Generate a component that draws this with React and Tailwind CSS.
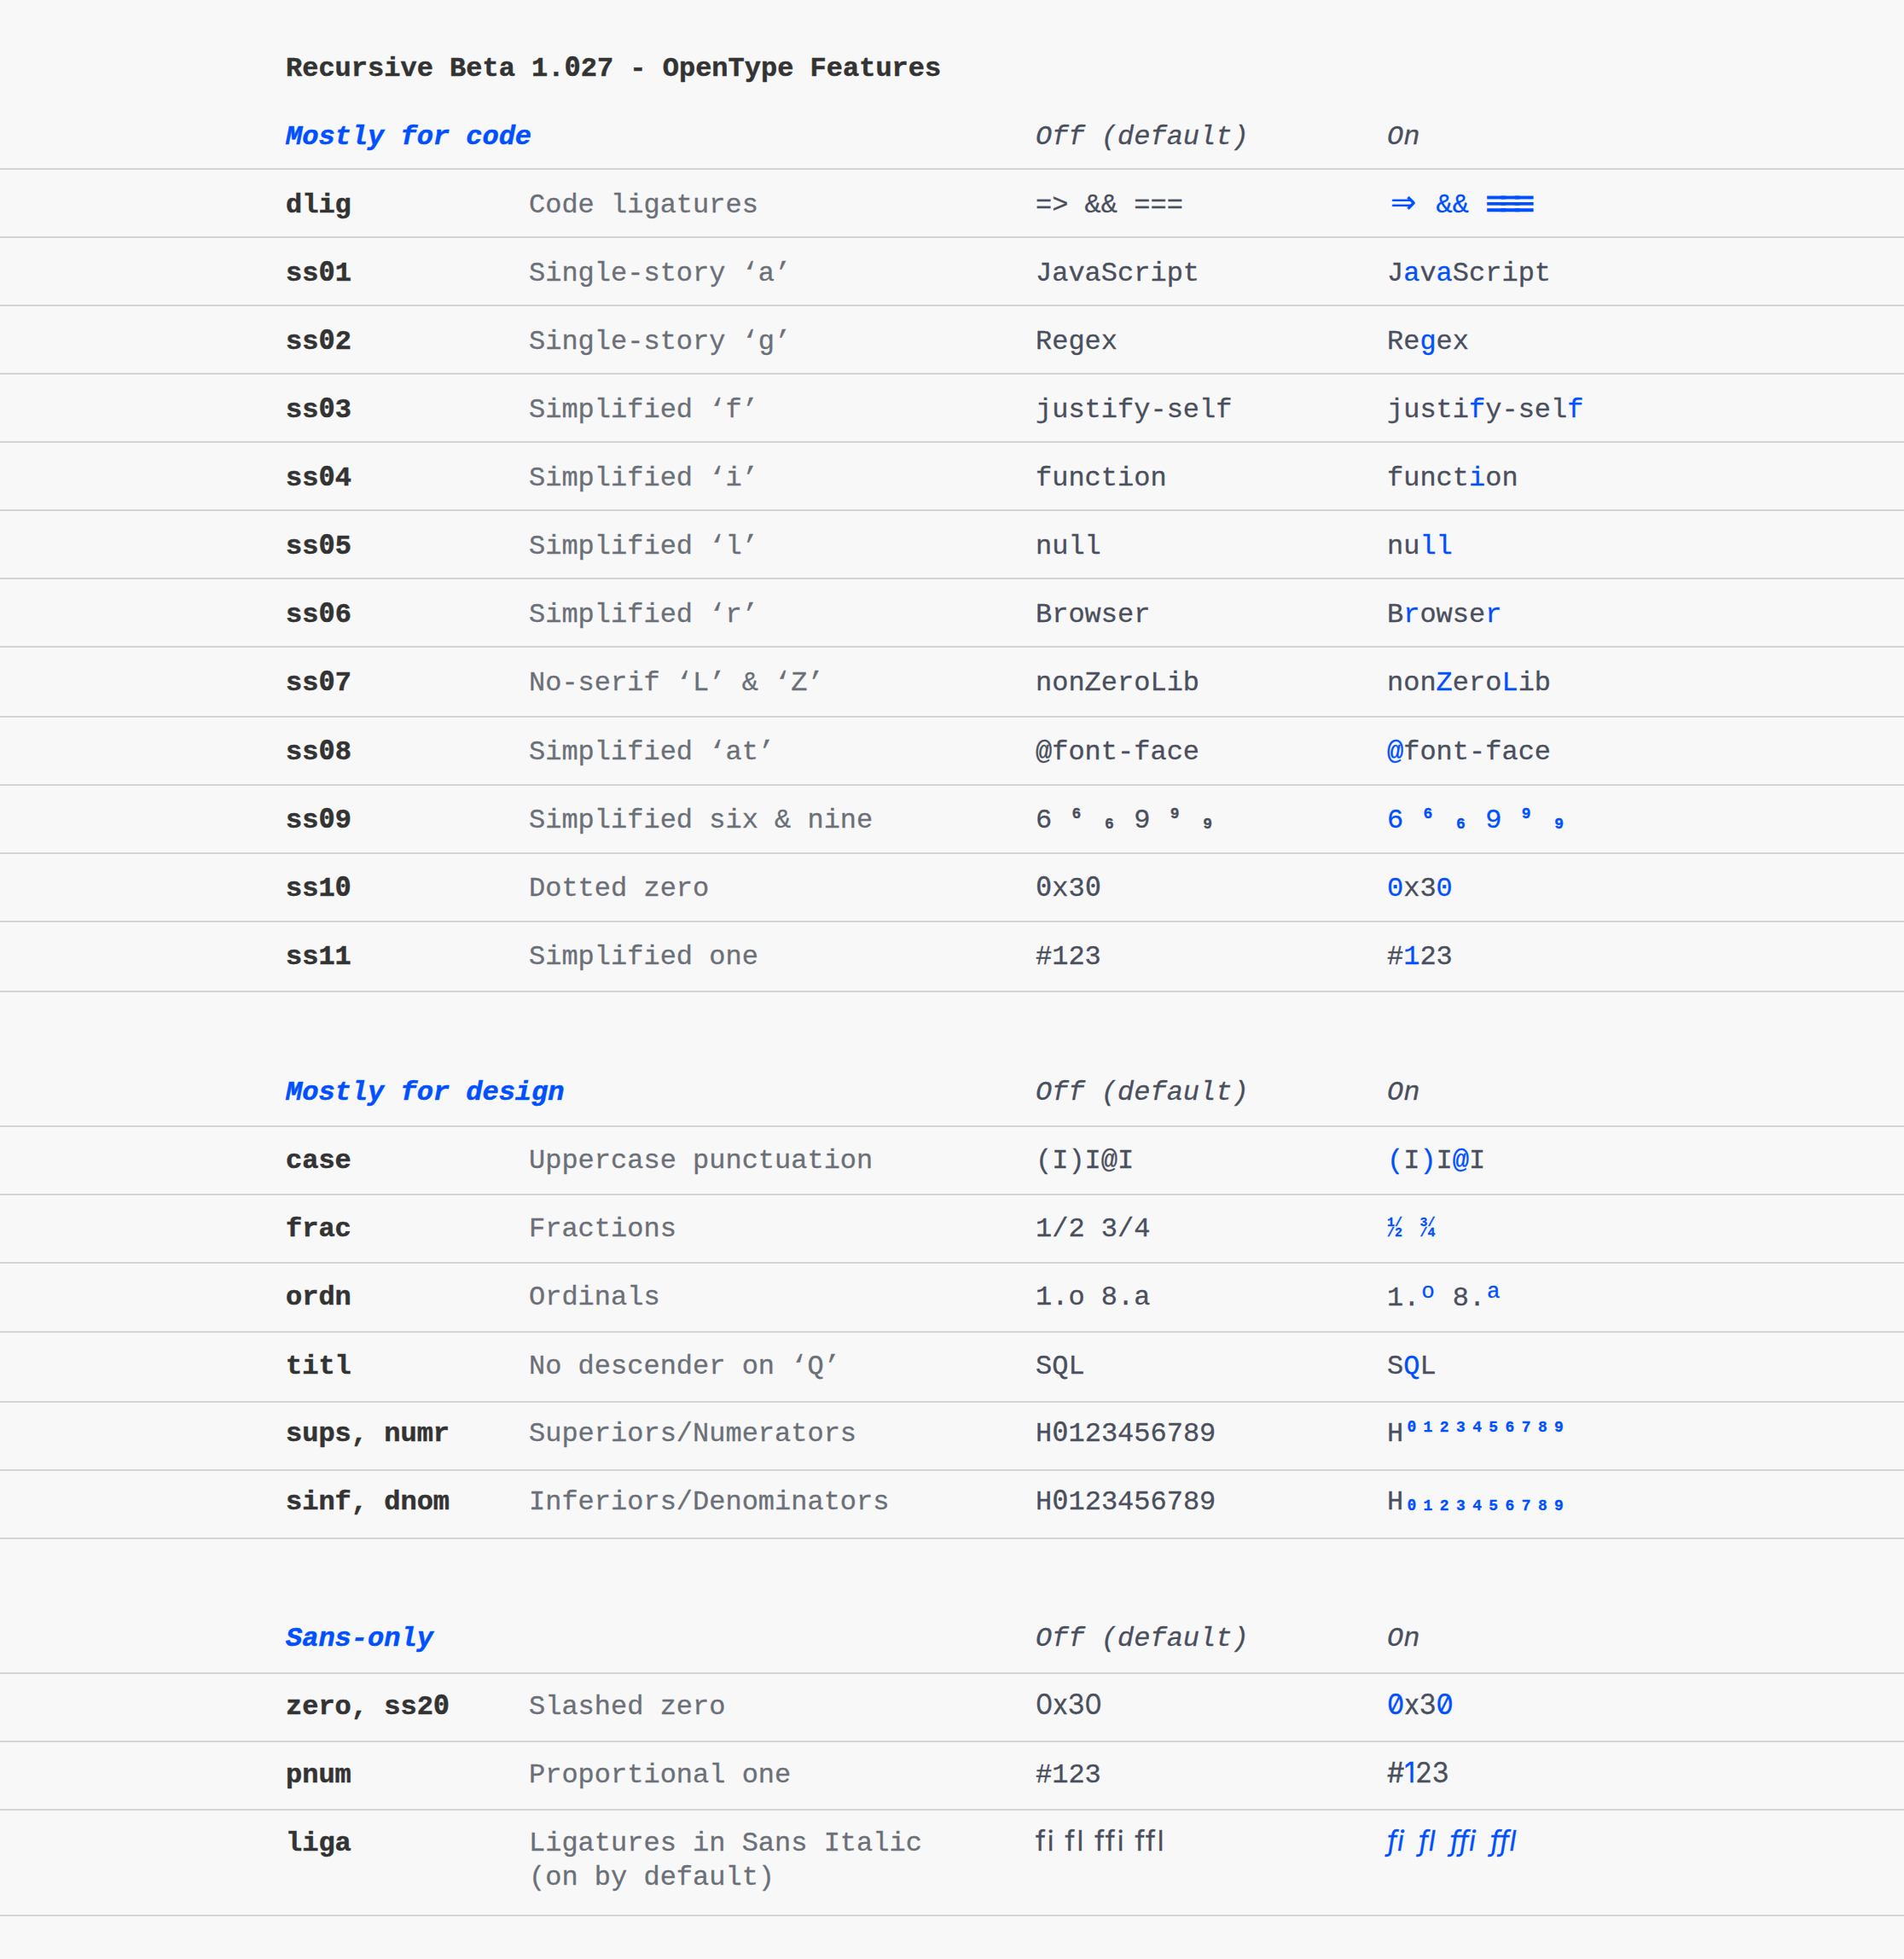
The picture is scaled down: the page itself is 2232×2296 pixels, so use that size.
import React from 'react';

// slashed zeros come from DejaVu, everything else stays in Liberation Mono
function Zeros({ text }) {
  return text.split(/(0)/).map((part, i) =>
    part === '0' ? (
      <span key={i} className="font-['DejaVu_Sans_Mono',monospace] leading-none">0</span>
    ) : (
      part
    )
  );
}

const B = ({ children }) => <span className="text-[#0050ff]">{children}</span>;

const Sup = ({ children }) => (
  <span className="inline-block w-[19.2px] text-center text-[18px] leading-none font-bold align-[11px]">{children}</span>
);

const Sub = ({ children }) => (
  <span className="inline-block w-[19.2px] text-center text-[18px] leading-none font-bold align-[-1px]">{children}</span>
);

const Ord = ({ children }) => (
  <span className="inline-block w-[19.2px] text-center text-[26px] leading-none text-[#0050ff] align-[9px]">{children}</span>
);

const Frac = ({ top, bottom }) => (
  <span className="inline-flex w-[19.2px] flex-col align-top mt-[7px] text-[15px] leading-[12px] font-bold text-[#0050ff]">
    <span>{top}</span>
    <span>{bottom}</span>
  </span>
);

const digits = ['0', '1', '2', '3', '4', '5', '6', '7', '8', '9'];

function Row({ label, desc, off, on, pad = 'pt-[22px] pb-[16px]' }) {
  return (
    <div className={`flex border-b-2 border-[#d4d4d4] pl-[335px] ${pad}`}>
      <div className="w-[285px] font-bold text-[#333333] [-webkit-text-stroke:0.5px]"><Zeros text={label} /></div>
      <div className="w-[594px] text-[#6b7078] whitespace-pre-line">{desc}</div>
      <div className="w-[412px] text-[#4a4f5e]">{off}</div>
      <div className="text-[#4a4f5e]">{on}</div>
    </div>
  );
}

function Head({ title, pb = 'pb-[19px]' }) {
  return (
    <div className={`flex border-b-2 border-[#d4d4d4] pl-[335px] italic ${pb}`}>
      <div className="w-[879px] font-bold text-[#0050ff] [-webkit-text-stroke:0.5px]">{title}</div>
      <div className="w-[412px] text-[#4a4f5e]">Off (default)</div>
      <div className="text-[#4a4f5e]">On</div>
    </div>
  );
}

const inter = "font-['Inter',sans-serif] leading-none";

export default function App() {
  return (
    <div className="min-h-[2296px] bg-[#f8f8f8] pt-[61px] font-['Liberation_Mono',monospace] text-[32px] leading-[40px] [-webkit-text-stroke:0.3px]">
      <h1 className="pl-[335px] font-bold text-[#333333] [-webkit-text-stroke:0.5px] mb-[40px]">
        <Zeros text="Recursive Beta 1.027 - OpenType Features" />
      </h1>

      {/* Code */}
      <section>
        <Head title="Mostly for code" pb="pb-[16px]" />
        <Row
          label="dlig"
          desc="Code ligatures"
          off="=> && ==="
          on={
            <span className="text-[#0050ff]">
              <span className="inline-block w-[38.4px] text-center text-[36px] leading-[0] font-['DejaVu_Sans',sans-serif]">⇒</span>
              {' '}&&{' '}
              <span className="font-['DejaVu_Sans_Mono',monospace] text-[42px] leading-[0] tracking-[-9px] align-[-3px]">≡≡≡</span>
            </span>
          }
        />
        <Row label="ss01" desc="Single-story ‘a’" off="JavaScript" on={<>J<B>a</B>v<B>a</B>Script</>} />
        <Row label="ss02" desc="Single-story ‘g’" off="Regex" on={<>Re<B>g</B>ex</>} />
        <Row label="ss03" desc="Simplified ‘f’" off="justify-self" on={<>justi<B>f</B>y-sel<B>f</B></>} />
        <Row label="ss04" desc="Simplified ‘i’" off="function" on={<>funct<B>i</B>on</>} />
        <Row label="ss05" desc="Simplified ‘l’" off="null" on={<>nu<B>ll</B></>} />
        <Row label="ss06" desc="Simplified ‘r’" off="Browser" on={<>B<B>r</B>owse<B>r</B></>} />
        <Row pad="pt-[22px] pb-[18px]" label="ss07" desc="No-serif ‘L’ & ‘Z’" off="nonZeroLib" on={<>non<B>Z</B>ero<B>L</B>ib</>} />
        <Row pad="pt-[21px] pb-[17px]" label="ss08" desc="Simplified ‘at’" off="@font-face" on={<><B>@</B>font-face</>} />
        <Row
          pad="pt-[21px] pb-[17px]"
          label="ss09"
          desc="Simplified six & nine"
          off={<>6 <Sup>6</Sup> <Sub>6</Sub> 9 <Sup>9</Sup> <Sub>9</Sub></>}
          on={<B>6 <Sup>6</Sup> <Sub>6</Sub> 9 <Sup>9</Sup> <Sub>9</Sub></B>}
        />
        <Row pad="pt-[21px] pb-[17px]" label="ss10" desc="Dotted zero" off={<Zeros text="0x30" />} on={<><B>0</B>x3<B>0</B></>} />
        <Row pad="pt-[21px] pb-[19px]" label="ss11" desc="Simplified one" off="#123" on={<>#<B>1</B>23</>} />
      </section>

      {/* Design */}
      <section className="mt-[98px]">
        <Head title="Mostly for design" pb="pb-[18px]" />
        <Row pad="pt-[20px] pb-[18px]" label="case" desc="Uppercase punctuation" off="(I)I@I" on={<><B>(</B>I<B>)</B>I<B>@</B>I</>} />
        <Row
          pad="pt-[20px] pb-[18px]"
          label="frac"
          desc="Fractions"
          off="1/2 3/4"
          on={<><Frac top="1/" bottom="/2" /> <Frac top="3/" bottom="/4" /></>}
        />
        <Row pad="pt-[20px] pb-[18px]" label="ordn" desc="Ordinals" off="1.o 8.a" on={<>1.<Ord>o</Ord> 8.<Ord>a</Ord></>} />
        <Row pad="pt-[20px] pb-[20px]" label="titl" desc="No descender on ‘Q’" off="SQL" on={<>S<B>Q</B>L</>} />
        <Row
          pad="pt-[17px] pb-[21px]"
          label="sups, numr"
          desc="Superiors/Numerators"
          off={<Zeros text="H0123456789" />}
          on={<>H<B>{digits.map((d) => <Sup key={d}><Zeros text={d} /></Sup>)}</B></>}
        />
        <Row
          pad="pt-[17px] pb-[21px]"
          label="sinf, dnom"
          desc="Inferiors/Denominators"
          off={<Zeros text="H0123456789" />}
          on={<>H<B>{digits.map((d) => <Sub key={d}><Zeros text={d} /></Sub>)}</B></>}
        />
      </section>

      {/* Sans */}
      <section className="mt-[97px]">
        <Head title="Sans-only" />
        <Row
          pad="pt-[19px] pb-[19px]"
          label="zero, ss20"
          desc="Slashed zero"
          off={<span className={inter}>0x30</span>}
          on={<span className={inter}><span className="slashed-zero text-[#0050ff]">0</span>x3<span className="slashed-zero text-[#0050ff]">0</span></span>}
        />
        <Row
          pad="pt-[19px] pb-[19px]"
          label="pnum"
          desc="Proportional one"
          off="#123"
          on={<span className={inter}>#<B>1</B>23</span>}
        />
        <Row
          pad="pt-[19px] pb-[23px]"
          label="liga"
          desc={'Ligatures in Sans Italic\n(on by default)'}
          off={<span className={`${inter} tracking-[2px]`}>fi fl ffi ffl</span>}
          on={<span className={`${inter} italic text-[#0050ff] [word-spacing:8px]`}>fi fl ffi ffl</span>}
        />
      </section>
    </div>
  );
}
